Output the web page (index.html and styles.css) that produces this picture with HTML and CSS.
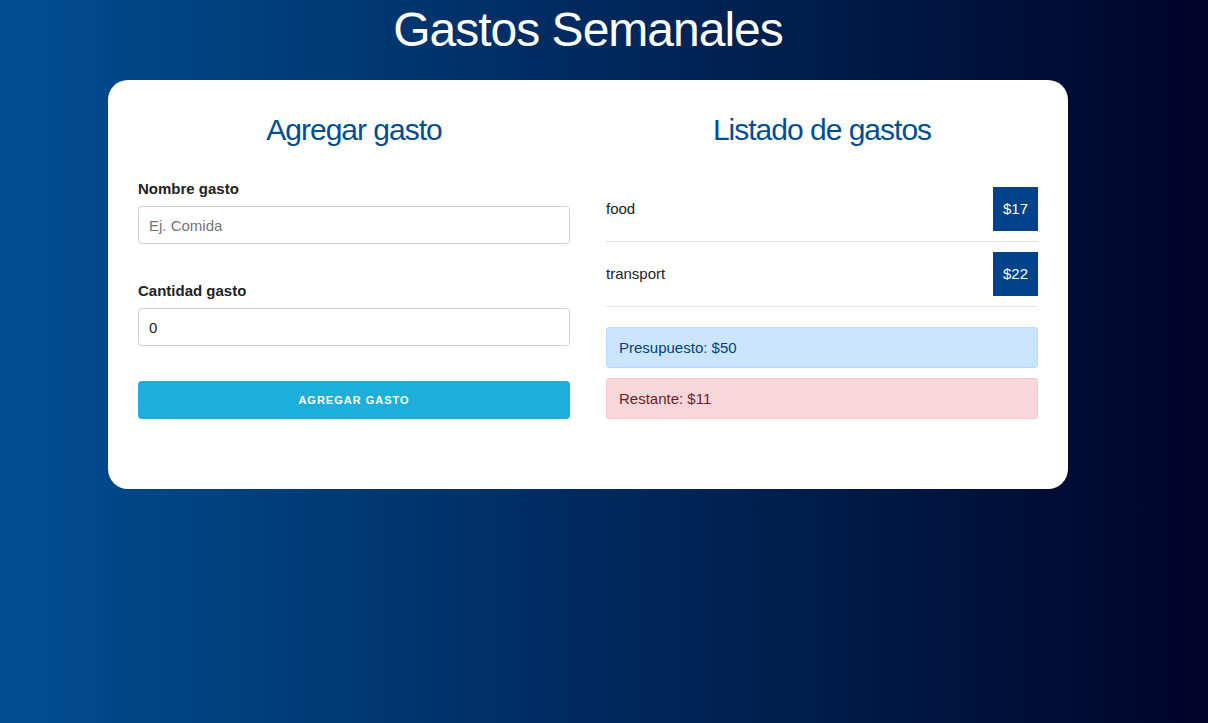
FILE: index.html
```html
<!DOCTYPE html>
<html lang="es">
<head>
<meta charset="utf-8">
<title>Gastos Semanales</title>
<link rel="stylesheet" href="styles.css">
</head>
<body>
<div class="page">
  <h1 class="title">Gastos Semanales</h1>
  <div class="card">
    <div class="col">
      <h2 class="col-title">Agregar gasto</h2>
      <form class="form">
        <div class="field">
          <label class="label">Nombre gasto</label>
          <input class="input" type="text" placeholder="Ej. Comida">
        </div>
        <div class="field">
          <label class="label">Cantidad gasto</label>
          <input class="input" type="text" value="0">
        </div>
        <button class="btn" type="button">Agregar gasto</button>
      </form>
    </div>
    <div class="col">
      <h2 class="col-title">Listado de gastos</h2>
      <ul class="list">
        <li class="item"><span>food</span><span class="badge">$17</span></li>
        <li class="item"><span>transport</span><span class="badge">$22</span></li>
      </ul>
      <div class="alert alert-primary">Presupuesto: $50</div>
      <div class="alert alert-danger">Restante: $11</div>
    </div>
  </div>
</div>
</body>
</html>
```

FILE: styles.css
```css
html, body {
  margin: 0;
  padding: 0;
  height: 100%;
}
body {
  background: linear-gradient(to right, #004e92, #000428);
  font-family: "Liberation Sans", Arial, sans-serif;
  font-size: 15px;
  line-height: 1.6;
  color: #222;
}
.page {
  padding-right: 32px;
  padding-top: 1px;
}
.title {
  margin: 0 0 21px;
  font-size: 48px;
  font-weight: 400;
  line-height: 58px;
  letter-spacing: -1px;
  color: #fff;
  text-align: center;
}
.card {
  width: 960px;
  margin: 0 auto;
  box-sizing: border-box;
  background: #fff;
  border-radius: 20px;
  padding: 32px 30px 60px;
  display: grid;
  grid-template-columns: 1fr 1fr;
  column-gap: 36px;
}
.col-title {
  margin: 0 0 29px;
  font-size: 30px;
  font-weight: 400;
  line-height: 36px;
  letter-spacing: -1px;
  color: #004e92;
  text-align: center;
}
.form {
  margin: 0;
}
.field {
  margin-bottom: 35px;
}
.label {
  display: block;
  font-weight: 700;
  margin-bottom: 5px;
  color: #222;
}
.input {
  display: block;
  width: 100%;
  height: 38px;
  box-sizing: border-box;
  padding: 6px 10px;
  border: 1px solid #d1d1d1;
  border-radius: 4px;
  font-family: "Liberation Sans", Arial, sans-serif;
  font-size: 15px;
  color: #222;
  background: #fff;
}
.input::placeholder {
  color: #757575;
}
.btn {
  display: block;
  width: 100%;
  height: 38px;
  border: 0;
  border-radius: 4px;
  background: #1eaedb;
  color: #fff;
  font-family: "Liberation Sans", Arial, sans-serif;
  font-size: 11px;
  font-weight: 700;
  letter-spacing: 1px;
  text-transform: uppercase;
  line-height: 38px;
  padding: 0;
}
.list {
  list-style: none;
  margin: 0 0 20px;
  padding: 0;
}
.item {
  display: flex;
  justify-content: space-between;
  align-items: center;
  padding: 10px 0;
  border-bottom: 1px solid #e1e1e1;
  color: #222;
}
.badge {
  background: #00438a;
  color: #fff;
  padding: 10px;
  line-height: 24px;
}
.alert {
  border: 1px solid;
  border-radius: 3px;
  padding: 7.5px 12px;
  margin-bottom: 10px;
}
.alert-primary {
  background: #cce5ff;
  border-color: #b8daff;
  color: #004085;
}
.alert-danger {
  background: #f8d7da;
  border-color: #f5c6cb;
  color: #721c24;
}
```
